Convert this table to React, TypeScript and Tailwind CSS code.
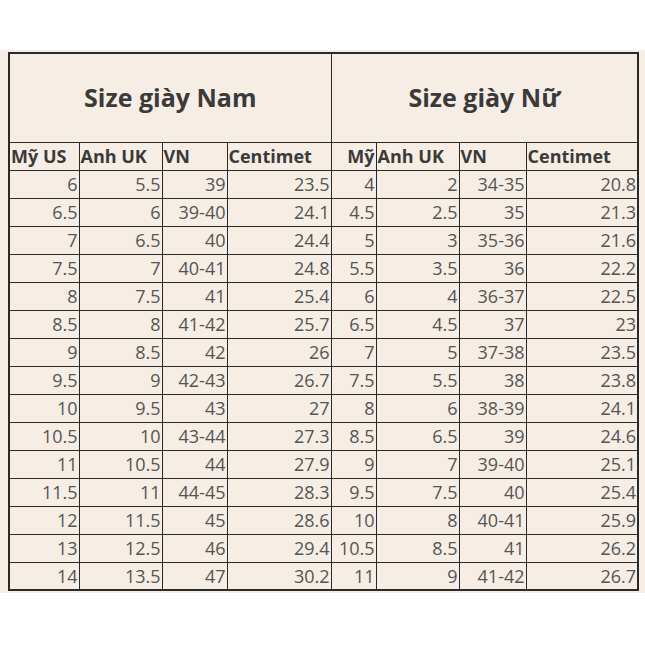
import React from "react";

const men = [
  ["6", "5.5", "39", "23.5"],
  ["6.5", "6", "39-40", "24.1"],
  ["7", "6.5", "40", "24.4"],
  ["7.5", "7", "40-41", "24.8"],
  ["8", "7.5", "41", "25.4"],
  ["8.5", "8", "41-42", "25.7"],
  ["9", "8.5", "42", "26"],
  ["9.5", "9", "42-43", "26.7"],
  ["10", "9.5", "43", "27"],
  ["10.5", "10", "43-44", "27.3"],
  ["11", "10.5", "44", "27.9"],
  ["11.5", "11", "44-45", "28.3"],
  ["12", "11.5", "45", "28.6"],
  ["13", "12.5", "46", "29.4"],
  ["14", "13.5", "47", "30.2"],
];
const women = [
  ["4", "2", "34-35", "20.8"],
  ["4.5", "2.5", "35", "21.3"],
  ["5", "3", "35-36", "21.6"],
  ["5.5", "3.5", "36", "22.2"],
  ["6", "4", "36-37", "22.5"],
  ["6.5", "4.5", "37", "23"],
  ["7", "5", "37-38", "23.5"],
  ["7.5", "5.5", "38", "23.8"],
  ["8", "6", "38-39", "24.1"],
  ["8.5", "6.5", "39", "24.6"],
  ["9", "7", "39-40", "25.1"],
  ["9.5", "7.5", "40", "25.4"],
  ["10", "8", "40-41", "25.9"],
  ["10.5", "8.5", "41", "26.2"],
  ["11", "9", "41-42", "26.7"],
];

const widths = [70, 83, 65, 104, 45, 83, 67, 112];
const headers = ["Mỹ US", "Anh UK", "VN", "Centimet", "Mỹ", "Anh UK", "VN", "Centimet"];

export default function App() {
  return (
    <div className="w-[645px] h-[645px] bg-white" style={{ fontFamily: '"Open Sans", sans-serif' }}>
      <div className="h-[50px]" />
      <div className="bg-[#f6ede4] w-[645px] h-[543px] pl-[8px] pt-[2px]">
        <table className="border-collapse table-fixed w-[629px] border-2 border-[#2a2a2a]">
          <colgroup>
            {widths.map((w, i) => (
              <col key={i} style={{ width: w }} />
            ))}
          </colgroup>
          <tbody>
            <tr className="h-[89px]">
              <td colSpan={4} className="border border-[#2a2a2a] text-center text-[25px] font-bold text-[#3a3a3a] p-0">
                Size giày Nam
              </td>
              <td colSpan={4} className="border border-[#2a2a2a] text-center text-[25px] font-bold text-[#3a3a3a] p-0">
                Size giày Nữ
              </td>
            </tr>
            <tr className="h-[28px]">
              {headers.map((h, i) => (
                <td
                  key={i}
                  className={`border border-[#2a2a2a] text-[18px] font-bold text-[#3a3a3a] p-0 leading-none whitespace-nowrap overflow-hidden ${i === 4 ? "text-right pr-[1px]" : "text-left pl-[1px]"}`}
                >
                  {h}
                </td>
              ))}
            </tr>
            {men.map((m, r) => (
              <tr key={r} className="h-[28px]">
                {[...m, ...women[r]].map((v, i) => (
                  <td
                    key={i}
                    className="border border-[#2a2a2a] text-[18px] text-[#555555] text-right p-0 pr-[1px] leading-none whitespace-nowrap"
                  >
                    {v}
                  </td>
                ))}
              </tr>
            ))}
          </tbody>
        </table>
      </div>
    </div>
  );
}
